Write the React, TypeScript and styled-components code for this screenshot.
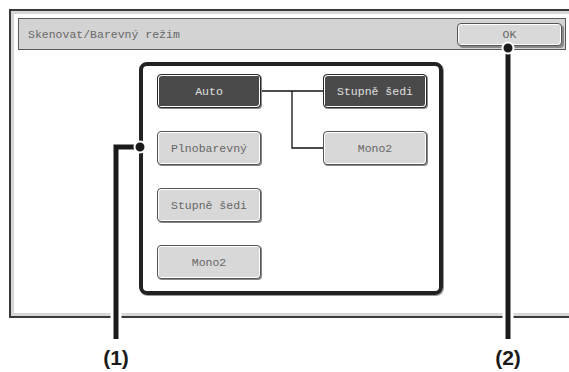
import React from "react";
import styled, { createGlobalStyle, css } from "styled-components";

const GlobalStyle = createGlobalStyle`
  html, body { margin: 0; padding: 0; background: #fff; }
  * { box-sizing: border-box; }
`;

const Page = styled.div`
  position: relative;
  width: 569px;
  height: 372px;
  overflow: hidden;
  background: #fff;
  font-family: "Liberation Mono", "DejaVu Sans Mono", monospace;
`;

const Screen = styled.div`
  margin: 9px 0 0 9px;
  width: 620px;
  height: 309px;
  border: 2px solid #3a3a3a;
  background: #fff;
`;

const ScreenInner = styled.div`
  height: 100%;
  border: 3px solid #d6d6d6;
  padding: 4px 0 0 4px;
  display: flex;
  flex-direction: column;
  align-items: flex-start;
`;

const TitleBar = styled.div`
  width: 548px;
  height: 32px;
  border: 1px solid #5a5a5a;
  background: #d3d3d3;
  display: flex;
  align-items: center;
  justify-content: space-between;
  padding: 0 3px 0 9px;
`;

const Title = styled.span`
  font-size: 11.5px;
  color: #666;
`;

const buttonBase = css`
  font-family: "Liberation Mono", "DejaVu Sans Mono", monospace;
  font-size: 11.5px;
  border-radius: 4px;
  display: flex;
  align-items: center;
  justify-content: center;
  padding: 0;
`;

const OkButton = styled.div`
  ${buttonBase};
  width: 105px;
  height: 23px;
  background: #d9d9d9;
  color: #666;
  border: 1px solid #555;
  box-shadow: inset 1px 1px 0 #fff, inset -1px -1px 0 #fff, 2px 2px 0 #8a8a8a;
`;

const GroupBox = styled.div`
  margin: 12px 0 0 121px;
  width: 304px;
  height: 233px;
  border: 4px solid #222;
  border-radius: 8px;
  padding: 8px 0 0 14px;
  box-shadow: 1px 1px 0 #9a9a9a;
`;

const OptionGrid = styled.div`
  display: grid;
  grid-template-columns: 105px 61px 105px;
  grid-auto-rows: 34px;
  row-gap: 23px;
`;

const OptionButton = styled.div<{ $active?: boolean; $col: number; $row: number }>`
  ${buttonBase};
  grid-column: ${(p) => p.$col};
  grid-row: ${(p) => p.$row};
  width: 104px;
  height: 34px;
  border: 1px solid ${(p) => (p.$active ? "#2a2a2a" : "#555")};
  background: ${(p) => (p.$active ? "#4a4a4a" : "#d8d8d8")};
  color: ${(p) => (p.$active ? "#e0e0e0" : "#666")};
  box-shadow: inset 1px 1px 0 #fff, inset -1px -1px 0 #fff, 1px 1px 0 #8a8a8a;
`;

const Connector = styled.svg`
  grid-column: 2;
  grid-row: 1 / span 2;
  width: 61px;
  height: 91px;
  display: block;
`;

const Callouts = styled.svg`
  position: absolute;
  left: 0;
  top: 0;
  width: 569px;
  height: 372px;
  pointer-events: none;
`;

const Label = styled.div<{ $x: number }>`
  position: absolute;
  top: 347px;
  left: ${(p) => p.$x - 25}px;
  width: 50px;
  text-align: center;
  font-family: "Liberation Sans", Arial, sans-serif;
  font-weight: bold;
  font-size: 21px;
  line-height: 1;
  color: #1a1a1a;
`;

const leftOptions = ["Auto", "Plnobarevný", "Stupně šedi", "Mono2"];

export default function App() {
  return (
    <Page>
      <GlobalStyle />
      <Screen>
        <ScreenInner>
          <TitleBar>
            <Title>Skenovat/Barevný režim</Title>
            <OkButton>OK</OkButton>
          </TitleBar>
          <GroupBox>
            <OptionGrid>
              {leftOptions.map((o, i) => (
                <OptionButton key={o} $col={1} $row={i + 1} $active={i === 0}>
                  {o}
                </OptionButton>
              ))}
              <Connector viewBox="0 0 61 91">
                <path d="M0 17 H61 M30 17 V74 H61" fill="none" stroke="#111" strokeWidth="1.3" />
              </Connector>
              <OptionButton $col={3} $row={1} $active>
                Stupně šedi
              </OptionButton>
              <OptionButton $col={3} $row={2}>
                Mono2
              </OptionButton>
            </OptionGrid>
          </GroupBox>
        </ScreenInner>
      </Screen>
      <Callouts viewBox="0 0 569 372">
        <path d="M140 147 H116 V339" fill="none" stroke="#fff" strokeWidth="11" />
        <path d="M508 48 V339" fill="none" stroke="#fff" strokeWidth="11" />
        <path d="M140 147 H116 V339" fill="none" stroke="#1a1a1a" strokeWidth="5" />
        <path d="M508 48 V339" fill="none" stroke="#1a1a1a" strokeWidth="5" />
        <circle cx="140" cy="147" r="5.5" fill="#1a1a1a" stroke="#fff" strokeWidth="2" />
        <circle cx="508" cy="48" r="5.5" fill="#1a1a1a" stroke="#fff" strokeWidth="2" />
      </Callouts>
      <Label $x={116}>(1)</Label>
      <Label $x={508}>(2)</Label>
    </Page>
  );
}
